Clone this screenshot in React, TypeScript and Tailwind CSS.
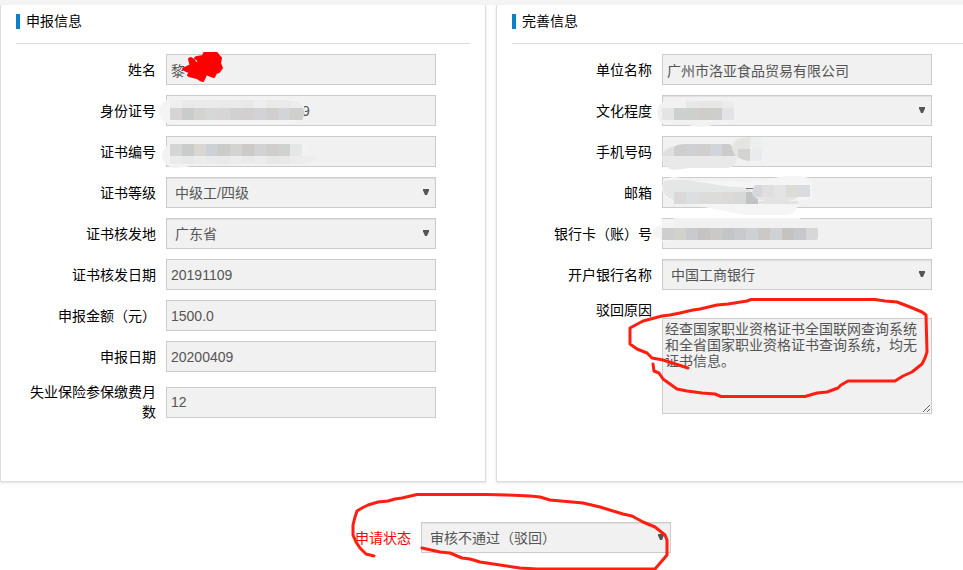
import React from "react";
import clsx from "clsx";

interface FieldItem {
  id: string;
  label: string;
  value: string;
  type: "input" | "select" | "textarea";
  inputClass?: string;
}

interface MosaicRow {
  x: number;
  y: number;
  height: number;
  colors: string[];
}

const applyFields: FieldItem[] = [
  { id: "name", label: "姓名", value: "黎", type: "input" },
  { id: "idCard", label: "身份证号", value: "9", type: "input", inputClass: "pl-[135px]" },
  { id: "certNo", label: "证书编号", value: "", type: "input" },
  { id: "certLevel", label: "证书等级", value: "中级工/四级", type: "select" },
  { id: "certArea", label: "证书核发地", value: "广东省", type: "select" },
  { id: "certDate", label: "证书核发日期", value: "20191109", type: "input" },
  { id: "amount", label: "申报金额（元）", value: "1500.0", type: "input" },
  { id: "applyDate", label: "申报日期", value: "20200409", type: "input" },
  { id: "months", label: "失业保险参保缴费月数", value: "12", type: "input" },
];

const detailFields: FieldItem[] = [
  { id: "company", label: "单位名称", value: "广州市洛亚食品贸易有限公司", type: "input" },
  { id: "education", label: "文化程度", value: "", type: "select" },
  { id: "mobile", label: "手机号码", value: "", type: "input" },
  { id: "email", label: "邮箱", value: "", type: "input" },
  { id: "bankCard", label: "银行卡（账）号", value: "", type: "input" },
  { id: "bankName", label: "开户银行名称", value: "中国工商银行", type: "select" },
  {
    id: "reason",
    label: "驳回原因",
    value: "经查国家职业资格证书全国联网查询系统和全省国家职业资格证书查询系统，均无证书信息。",
    type: "textarea",
  },
];

// 12px blocks that cover the private values
const mosaicRows: MosaicRow[] = [
  { x: 170, y: 100, height: 8, colors: ["#efefef", "#e9e9e8", "#e9eae9", "#ebebeb", "#e8e9e8", "#ebeaea", "#e8e8e7", "#edefee", "#e9e9e7", "#e9e9e7"] },
  { x: 170, y: 108, height: 12, colors: ["#d6d5d3", "#cacccb", "#d4d3d1", "#d6d7d7", "#d8d6d4", "#d1d1d1", "#d1d0ce", "#d2d2d7", "#d0cfcd", "#d3d4d7"] },
  { x: 170, y: 144, height: 12, colors: ["#d5d5d5", "#cacccb", "#dad7d0", "#ccd1d5", "#cbcbca", "#d3d3d1", "#cccac8", "#d2d1d4", "#d0ceca", "#d0d2d0", "#e5e7e6"] },
  { x: 170, y: 156, height: 8, colors: ["#ebebeb", "#e7e8e8", "#ececec", "#e9eaea", "#e8eae9", "#ececec", "#e9eae9", "#ececec", "#e6e8e7", "#e8e9e7", "#ececec"] },
  { x: 686, y: 101, height: 7, colors: ["#e6e8e7", "#e6e6e6", "#e6e6e4", "#ececec"] },
  { x: 662, y: 108, height: 12, colors: ["#e4e4e4", "#ccd0ce", "#ced0cd", "#cecdca", "#cecece", "#e3e3e6"] },
  { x: 686, y: 144, height: 12, colors: ["#cfd0d4", "#d1cfcd", "#d1d5d9"] },
  { x: 674, y: 192, height: 12, colors: ["#dbd9d8", "#dcdfe2", "#dddcda", "#dcdcda", "#dbdad9", "#d5dad9", "#c2c3c5"] },
  { x: 662, y: 228, height: 12, colors: ["#cecece", "#d3d1cb", "#c9cacd", "#c5c4c3", "#cbc9c8", "#c4c5c8", "#c9cacd", "#cdd1d3", "#cbc8c7", "#cfd2d4", "#c5c3c0", "#c7c8cb"] },
];

const Arrow = () => (
  <svg className="pointer-events-none absolute top-3 right-[7px] h-1.5 w-1.5" viewBox="0 0 6 6" aria-hidden="true">
    <path d="M0 0h6v1.500L4 6H2L0 1.500z" fill="#555" />
  </svg>
);

const Control = ({ item }: { item: FieldItem }) => {
  if (item.type === "select") {
    return (
      <div className="relative">
        <select
          id={item.id}
          defaultValue={item.value}
          className="block h-[31px] w-full appearance-none border border-[#ccc] bg-[#f1f1f1] pr-5 pl-2 text-sm text-[#555] shadow-[inset_0_1px_1px_rgba(0,0,0,0.075)]"
        >
          <option value={item.value}>{item.value}</option>
        </select>
        <Arrow />
      </div>
    );
  }

  if (item.type === "textarea") {
    return (
      <textarea
        id={item.id}
        readOnly
        defaultValue={item.value}
        className="mt-[18px] block h-24 w-full resize border border-[#ccc] bg-[#f1f1f1] p-0.5 text-sm leading-4 text-[#555]"
      />
    );
  }

  return (
    <input
      id={item.id}
      type="text"
      readOnly
      defaultValue={item.value}
      className={clsx(
        "block h-[31px] w-full border border-[#ccc] bg-[#f1f1f1] text-sm text-[#555]",
        item.inputClass ?? "pl-1"
      )}
    />
  );
};

const Panel = ({ title, fields }: { title: string; fields: FieldItem[] }) => (
  <section className="border border-t-0 border-[#ddd] bg-white px-[15px] pb-[59px] shadow-[0_1px_2px_rgba(0,0,0,0.12)]">
    <div className="flex items-center border-b border-[#ddd] pt-1.5 pb-3">
      <span className="h-[15px] w-1 bg-[#0a80c9]" />
      <h2 className="pl-1.5 text-sm leading-5">{title}</h2>
    </div>
    <div className="flex flex-col gap-2.5 pt-2.5 pr-[34px]">
      {fields.map((item) => (
        <div
          key={item.id}
          className={clsx("flex gap-2.5", item.type === "textarea" ? "items-start" : "items-center")}
        >
          <label htmlFor={item.id} className="w-[140px] shrink-0 pl-2.5 text-right text-sm leading-5">
            {item.label}
          </label>
          <div className="min-w-0 flex-1">
            <Control item={item} />
          </div>
        </div>
      ))}
    </div>
  </section>
);

// Hand-drawn marks and mosaic smears lying over the form
const Annotations = () => (
  <svg
    className="pointer-events-none absolute top-0 left-0"
    width="963"
    height="570"
    viewBox="0 0 963 570"
    fill="none"
    aria-hidden="true"
  >
    <g fill="#f4f4f4">
      <path d="M170 99H292Q304 101 305 111Q304 121 292 124H172Q159 123 159 111Q160 101 170 99z" />
      <path d="M172 143H300Q310 143 308 156H316L311 164H194Q188 168 172 168Q162 163 162 155Q163 146 172 143z" fill="#f2f2f2" />
      <path d="M667 101H725Q741 102 740 111Q737 124 724 125H712Q702 129 688 125H665Q657 122 657 111Q658 102 667 101z" fill="#f2f2f2" />
      <path d="M664 180Q675 174 684 180L750 182L786 176Q812 174 812 184V196Q814 200 798 201Q799 213 787 215H745L709 208L670 200Q662 196 662 188z" fill="#f5f5f5" />
      <path d="M662 219H674V218H800V219H674V240Q662 246 662 240Q652 237 653 231Q654 226 662 225z" />
    </g>
    <path d="M662 157Q665 147 680 144H728Q740 147 738 157Q736 167 728 168H690L674 170Q662 168 662 157z" fill="#e8e9e8" />
    <path d="M662 156Q664 148 674 147V156z" fill="#dedfdf" />
    <path d="M674 147Q678 144 686 144V156H674z" fill="#d0cecd" />
    <path d="M722 144H729Q732 145 732 149L736 156H722z" fill="#cdcbc9" />
    <path d="M664 181Q680 178 700 182L725 186L750 188L756 204H720Q695 203 674 200Q663 197 663 188z" fill="#e5e7e6" />
    {mosaicRows.map((row) =>
      row.colors.map((color, index) => (
        <rect
          key={`${row.x}-${row.y}-${index}`}
          x={row.x + index * 12}
          y={row.y}
          width="12"
          height={row.height}
          fill={color}
        />
      ))
    )}
    <path d="M290 100Q302 101 304 109H290z" fill="#ebecec" />
    <path d="M290 108H303Q306 113 302 120H290z" fill="#cfcfce" />
    <path d="M302 156H316Q312 164 302 164z" fill="#ededed" />
    <path d="M806 228H818V238Q818 240 816 240H806z" fill="#d7d7d7" />
    <path d="M758 201H798V204H758z" fill="#e3e3e3" />
    <path d="M754 188H746V189H754z" fill="#777" />
    <path d="M750 137Q732 137 732 149Q735 160 750 161z" fill="#e4e4e3" />
    <path d="M750 137H762V149H750z" fill="#edefef" />
    <path d="M738 149H750V161Q740 160 738 156z" fill="#d5d3d1" />
    <path d="M750 149H762V161H750z" fill="#e9ebed" />
    <path d="M756 185H810V197H798Q794 201 786 201H765Q752 199 752 192z" fill="#e3e4e3" />
    <path d="M755 185H762V197H753Q751 190 755 185z" fill="#d5d7db" />
    <path d="M762 185H774V197H762z" fill="#dfdfdd" />
    <path d="M786 185H798V197H786z" fill="#dddbd8" />
    <path d="M798 185H810V197H798z" fill="#dadbde" />

    <path
      d="M204 53H217L219 56L221 58L220 63L222 68L219 72L216 73L214 77L211 76L206 74L205 77L203 81L200 80L197 78L193 77L189 76L188 75L190 72L186 71L183 69L187 67L191 65L190 63L189 59L191 58L194 60L196 64L199 61L195 58L197 57L203 56z"
      fill="#f00"
      stroke="#f00"
      strokeWidth="2"
      strokeLinejoin="round"
    />
    <g stroke="#ff1e10" strokeWidth="3" strokeLinecap="round" strokeLinejoin="round">
      <path d="M688 368L663 360L652 358L647 353L637 349L630 344V328L643 321L662 316L670 315L680 313L693 310L700 309L717 305L728 304L747 301L751 299.500H875L885 301L897 302L910 307L922 312L926 315L927 352L925 358L922 364L912 372L903 376L895 381H848L841 385L838 388L827 392L817 393L805 396.500H721L715 394L702 393L687 391L677 389L663 379L659 373L654 371L653 364" />
      <path d="M374 556L370 555L366 554L360 548L356 542L353 535V525L355 517L357 511L362 508L368 505L378 502L388 501L395 499L402 498L417 494.500H487L507 495L530 496L540 497L550 500L583 503L600 507L623 514L632 516L643 522L655 527L665 535L667 540V555L655 569H537L520 568L500 565L480 562L470 559L462 558L450 553L440 552L422 548" />
    </g>
  </svg>
);

const App = () => {
  return (
    <div className="relative overflow-hidden bg-white font-['Liberation_Sans','Noto_Sans_CJK_SC',sans-serif] text-black">
      <div className="h-[5px] bg-[#f4f4f4]" />
      <main className="min-w-[982px]">
        <div className="grid grid-cols-2 gap-2.5">
          <Panel title="申报信息" fields={applyFields} />
          <Panel title="完善信息" fields={detailFields} />
        </div>
        <div className="flex items-center justify-center gap-2.5 pt-10 pb-[17px] pl-11">
          <label htmlFor="status" className="text-sm text-[#f00]">
            申请状态
          </label>
          <div className="w-[250px]">
            <Control item={{ id: "status", label: "申请状态", value: "审核不通过（驳回）", type: "select" }} />
          </div>
        </div>
      </main>
      <Annotations />
    </div>
  );
};

export default App;
